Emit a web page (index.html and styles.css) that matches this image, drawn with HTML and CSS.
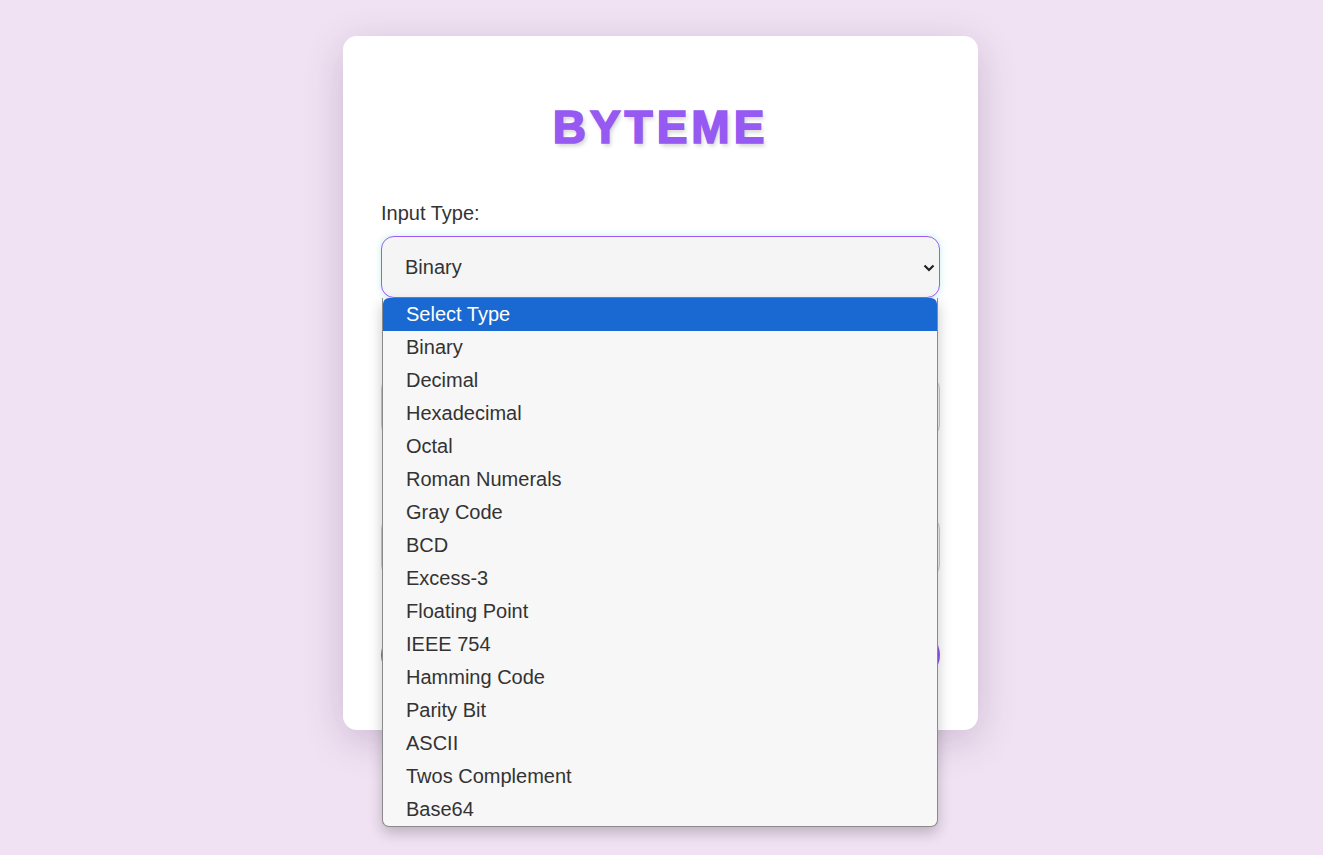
FILE: index.html
```html
<!DOCTYPE html>
<html lang="en">
<head>
<meta charset="utf-8">
<title>ByteMe</title>
<link rel="stylesheet" href="styles.css">
</head>
<body>
<main class="page">
  <section class="card">
    <h1 class="title">BYTEME</h1>
    <div class="field">
      <label class="label" for="inType">Input Type:</label>
      <div class="select-wrap">
        <select id="inType" class="control select is-focused">
          <option>Select Type</option>
          <option selected>Binary</option>
        </select>
        <svg class="chev" width="12" height="8" viewBox="0 0 12 8"><path d="M1.5 1.5 L6 6 L10.5 1.5" fill="none" stroke="#222" stroke-width="2.2"/></svg>
        <ul class="dropdown">
          <li class="opt active">Select Type</li>
          <li class="opt">Binary</li>
          <li class="opt">Decimal</li>
          <li class="opt">Hexadecimal</li>
          <li class="opt">Octal</li>
          <li class="opt">Roman Numerals</li>
          <li class="opt">Gray Code</li>
          <li class="opt">BCD</li>
          <li class="opt">Excess-3</li>
          <li class="opt">Floating Point</li>
          <li class="opt">IEEE 754</li>
          <li class="opt">Hamming Code</li>
          <li class="opt">Parity Bit</li>
          <li class="opt">ASCII</li>
          <li class="opt">Twos Complement</li>
          <li class="opt">Base64</li>
        </ul>
      </div>
    </div>
    <div class="field">
      <label class="label" for="val" aria-label="Enter Value"></label>
      <input id="val" class="control input" type="text" aria-label="Value">
    </div>
    <div class="field">
      <label class="label" for="outType" aria-label="Output Type"></label>
      <select id="outType" class="control select plain" aria-label="Output Type">
        <option value=""></option>
      </select>
    </div>
    <button class="btn" aria-label="Convert"></button>
  </section>
</main>
</body>
</html>
```

FILE: styles.css
```css
* { box-sizing: border-box; }
html, body { margin: 0; padding: 0; }
body {
  background: #f0e2f3;
  font-family: "Liberation Sans", Arial, sans-serif;
  color: #333;
  min-height: 855px;
}
.page {
  display: flex;
  justify-content: center;
  padding: 36px 2px 0 0;
}
.card {
  width: 635px;
  background: #fff;
  border-radius: 14px;
  box-shadow: 0 10px 40px rgba(70, 30, 80, 0.2);
  padding: 62px 38px 50px;
  display: flex;
  flex-direction: column;
}
.title {
  margin: 0 0 45px;
  text-align: center;
  font-size: 46px;
  line-height: 58px;
  font-weight: 900;
  letter-spacing: 4px;
  color: #965af2;
  -webkit-text-stroke: 1.7px #965af2;
  text-shadow: 2px 3px 4px rgba(0, 0, 0, 0.18);
}
.field {
  display: flex;
  flex-direction: column;
  margin-bottom: 43px;
}
.label {
  font-size: 20px;
  line-height: 24px;
  height: 24px;
  color: #333;
  margin-bottom: 11px;
}
.select-wrap { position: relative; }
.control {
  width: 100%;
  font-family: "Liberation Sans", Arial, sans-serif;
  font-size: 20px;
  color: #333;
  background: #f5f5f5;
  border: 1px solid #ccc;
  border-radius: 13px;
  outline: none;
  height: 62px;
}
.select {
  -webkit-appearance: none;
  appearance: none;
  padding: 0 22px 0 23px;
}
.select.is-focused {
  border-color: #9a5cf5;
  box-shadow: 0 0 7px rgba(90, 200, 200, 0.35);
}
.input { padding: 0 22px; }
.chev {
  position: absolute;
  right: 5px;
  top: 28px;
}
.dropdown {
  position: absolute;
  left: 1px;
  right: 2px;
  top: 62px;
  margin: 0;
  padding: 0;
  list-style: none;
  background: #f7f7f7;
  border: 1px solid #8a8a8a;
  border-top: none;
  border-radius: 0 0 7px 7px;
  box-shadow: 0 6px 14px rgba(0, 0, 0, 0.22);
  overflow: hidden;
  z-index: 10;
}
.opt {
  height: 33px;
  line-height: 33px;
  padding-left: 23px;
  font-size: 20px;
  color: #333;
}
.opt.active {
  background: #1a68d2;
  color: #fff;
  border-radius: 6px 6px 0 0;
}
.btn {
  height: 50px;
  margin-top: 9px;
  border: none;
  border-radius: 25px;
  background: #8f55ee;
  color: #fff;
  font-size: 20px;
  font-family: "Liberation Sans", Arial, sans-serif;
}
```
